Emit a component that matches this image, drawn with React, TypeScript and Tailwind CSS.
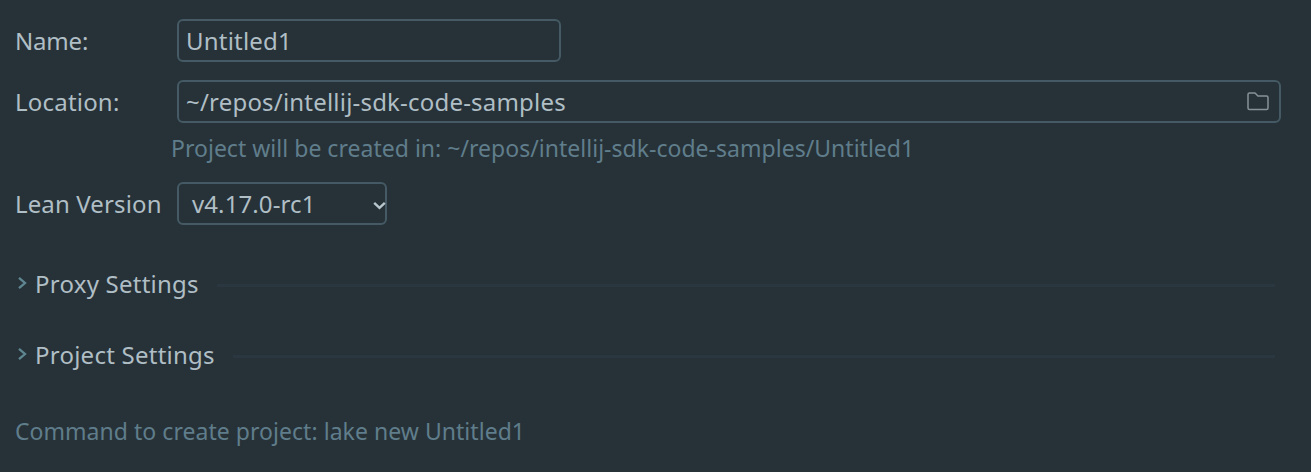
import React from "react";

const label = "w-[162px] shrink-0 whitespace-nowrap";
const box = "flex items-center rounded-[6px] border-2 border-[#455a64] whitespace-nowrap";

function Section({ title, className }: { title: string; className: string }) {
  return (
    <div className={`flex h-9 items-center pr-[36px] ${className}`}>
      <svg className="mt-[-3px] mr-[7px] ml-[2px] shrink-0" width="11" height="15" viewBox="0 0 11 15" fill="none" stroke="#5f8792" strokeWidth="2.3">
        <path d="M2 2.800l6 5.200-6 5.200" />
      </svg>
      <span className="shrink-0 tracking-[0.24px]">{title}</span>
      <div className="mt-[2px] ml-[18px] h-[3px] flex-1 bg-[#2a3740]" />
    </div>
  );
}

export default function App() {
  return (
    <div className="h-[472px] w-[1311px] overflow-hidden bg-[#263238] pl-[15px] font-['Noto_Sans',sans-serif] text-[24px] leading-9 tracking-[0.2px] text-[#b0bec5]">
      <div className="flex items-center pt-[19px]">
        <label className={`${label} tracking-[-0.2px]`}>Name:</label>
        <div className={`${box} h-[43px] w-[384px] pl-[7px]`}>Untitled1</div>
      </div>
      <div className="mt-[18px] flex items-center">
        <label className={label}>Location:</label>
        <div className={`${box} h-[43px] w-[1104px] justify-between pr-[10px] pl-[7px]`}>
          <span>~/repos/intellij-sdk-code-samples</span>
          <svg width="22" height="20" viewBox="0 0 22 20" fill="none" stroke="#879297" strokeWidth="1.5" strokeLinejoin="round">
            <path d="M1 2.500Q1 1 2.500 1H7.500Q8.300 1 8.800 1.700L10.900 4H19.500Q21 4 21 5.500V16Q21 17.500 19.500 17.500H2.500Q1 17.500 1 16Z" />
          </svg>
        </div>
      </div>
      <p className="mt-[7px] ml-[156px] text-[23px] tracking-[0.02px] text-[#607d8b]">Project will be created in: ~/repos/intellij-sdk-code-samples/Untitled1</p>
      <div className="mt-[16px] flex items-center">
        <label className={`${label} tracking-[0.13px]`}>Lean Version</label>
        <div className={`${box} h-[43px] w-[210px] justify-between pl-[13px]`}>
          <span className="tracking-[0.1px]">v4.17.0-rc1</span>
          <svg className="mt-[3px] mr-[-1px] shrink-0" width="13" height="10" viewBox="0 0 13 10" fill="none" stroke="#b8c6cd" strokeWidth="2.4">
            <path d="M1.200 2.800L6.500 7.800L11.800 2.800" />
          </svg>
        </div>
      </div>
      <Section title="Proxy Settings" className="mt-[41px]" />
      <Section title="Project Settings" className="mt-[35px]" />
      <p className="mt-[40px] text-[23px] tracking-[0.04px] text-[#607d8b]">Command to create project: lake new Untitled1</p>
    </div>
  );
}
